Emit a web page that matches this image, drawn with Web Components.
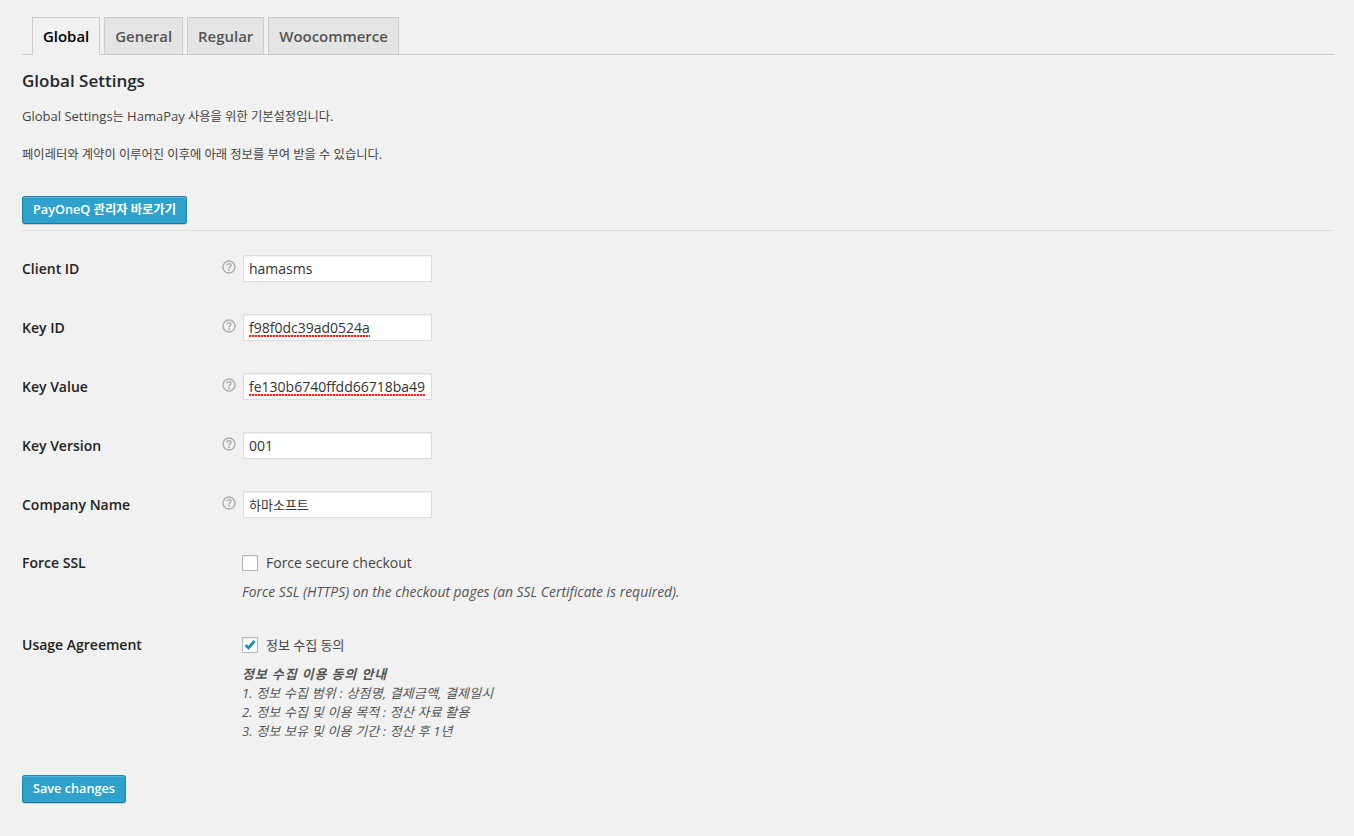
<!DOCTYPE html>
<html lang="ko">
<head>
<meta charset="utf-8">
<title>Global Settings</title>
<style>
  html, body { margin: 0; background: #f1f1f1; }
  body { font: 13px/1.4 "Open Sans", "Noto Sans CJK KR", sans-serif; color: #444; }
  .en { font-size: 13px; }
  .ko { font-size: 13px; }
  .btn-ko { font-size: 12.3px; }
  .small b { letter-spacing: .85px; }
</style>
</head>
<body>
<hp-settings>
  <hp-tabs slot="tabs">
    <hp-tab active>Global</hp-tab>
    <hp-tab>General</hp-tab>
    <hp-tab>Regular</hp-tab>
    <hp-tab>Woocommerce</hp-tab>
  </hp-tabs>

  <hp-intro slot="intro" heading="Global Settings">
    <p><span class="en">Global Settings</span>는 <span class="en">HamaPay</span> 사용을 위한 기본설정입니다.</p>
    <p>페이레터와 계약이 이루어진 이후에 아래 정보를 부여 받을 수 있습니다.</p>
    <hp-button>PayOneQ <span class="btn-ko">관리자 바로가기</span></hp-button>
  </hp-intro>

  <hp-field label="Client ID" help><hp-input>hamasms</hp-input></hp-field>
  <hp-field label="Key ID" help><hp-input misspelled>f98f0dc39ad0524a</hp-input></hp-field>
  <hp-field label="Key Value" help><hp-input misspelled>fe130b6740ffdd66718ba49</hp-input></hp-field>
  <hp-field label="Key Version" help><hp-input>001</hp-input></hp-field>
  <hp-field label="Company Name" help><hp-input><span class="ko">하마소프트</span></hp-input></hp-field>

  <hp-check-field label="Force SSL" text="Force secure checkout">
    <em>Force SSL (HTTPS) on the checkout pages (an SSL Certificate is required).</em>
  </hp-check-field>

  <hp-check-field label="Usage Agreement" text="정보 수집 동의" checked korean>
    <div class="small"><em><b>정보 수집 이용 동의 안내</b><br>
    1. 정보 수집 범위 : 상점명, 결제금액, 결제일시<br>
    2. 정보 수집 및 이용 목적 : 정산 자료 활용<br>
    3. 정보 보유 및 이용 기간 : 정산 후 1년</em></div>
  </hp-check-field>

  <hp-button slot="footer">Save changes</hp-button>
</hp-settings>

<script>
const FONT = '"Open Sans", "Noto Sans CJK KR", sans-serif';

class HpSettings extends HTMLElement {
  constructor() {
    super();
    this.attachShadow({ mode: 'open' }).innerHTML = `
    <style>
      :host { display: block; padding: 17px 20px 33px 22px; font-family: ${FONT}; }
      .fields { padding-top: 24px; }
      .footer { padding-top: 4px; }
    </style>
    <slot name="tabs"></slot>
    <slot name="intro"></slot>
    <div class="fields"><slot></slot></div>
    <div class="footer"><slot name="footer"></slot></div>
    `;
  }
}

class HpTabs extends HTMLElement {
  constructor() {
    super();
    this.attachShadow({ mode: 'open' }).innerHTML = `
    <style>
      :host { display: flex; gap: 4px; padding-left: 10px; border-bottom: 1px solid #ccc; height: 37px; }
    </style>
    <slot></slot>
    `;
  }
}

class HpTab extends HTMLElement {
  constructor() {
    super();
    this.attachShadow({ mode: 'open' }).innerHTML = `
    <style>
      :host {
        display: block; box-sizing: border-box; height: 37px; padding: 0 10px;
        border: 1px solid #ccc; border-bottom: 0;
        background: #e4e4e4; color: #555;
        font: 600 14.95px/37px ${FONT};
      }
      :host([active]) { height: 38px; background: #f1f1f1; color: #000; }
    </style>
    <slot></slot>
    `;
  }
}

class HpIntro extends HTMLElement {
  constructor() {
    super();
    this.attachShadow({ mode: 'open' }).innerHTML = `
    <style>
      :host { display: block; border-bottom: 1px solid #ddd; padding-bottom: 6px; }
      h3 { margin: 0; padding-top: 15px; color: #23282d; font: 600 17px/22px ${FONT}; }
      ::slotted(p) { margin: 0 0 20px; font-size: 12.3px; line-height: 18px; color: #444; }
      .body { padding-top: 15px; }
      ::slotted(hp-button) { margin-top: 32px; }
    </style>
    <h3></h3>
    <div class="body"><slot></slot></div>
    `;
    this.shadowRoot.querySelector('h3').textContent = this.getAttribute('heading');
  }
}

class HpButton extends HTMLElement {
  constructor() {
    super();
    this.attachShadow({ mode: 'open' }).innerHTML = `
    <style>
      :host { display: block; width: fit-content; }
      div {
        box-sizing: border-box; height: 28px; padding: 0 10px 1px;
        background: #2ea2cc; border: 1px solid #1f85b0; border-bottom-color: #1a78a3; border-radius: 3px;
        box-shadow: inset 0 1px 0 rgba(120,200,230,.5), 0 1px 0 rgba(0,0,0,.15);
        color: #fff; font: 600 12.7px/25px ${FONT}; white-space: nowrap;
      }
    </style>
    <div><slot></slot></div>
    `;
  }
}

class HpField extends HTMLElement {
  constructor() {
    super();
    this.attachShadow({ mode: 'open' }).innerHTML = `
    <style>
      :host { display: grid; grid-template-columns: 200px 21px 1fr; height: 59px; }
      .label { font: 600 14px/27px ${FONT}; color: #222; }
      svg { display: block; margin-top: 5px; }
    </style>
    <div class="label"></div>
    <div class="help">
      <svg width="14" height="14" viewBox="0 0 14 14" fill="none" stroke="#b0b0b0">
        <circle cx="7" cy="7" r="6" stroke-width="1.5"/>
        <path d="M5 5.6C5 4.4 6 3.8 7 3.8s2 .6 2 1.7c0 1.4-2 1.4-2 2.9" stroke-width="1.5"/>
        <circle cx="7" cy="10.2" r="1" fill="#b0b0b0" stroke="none"/>
      </svg>
    </div>
    <div><slot></slot></div>
    `;
    this.shadowRoot.querySelector('.label').textContent = this.getAttribute('label');
  }
}

class HpInput extends HTMLElement {
  constructor() {
    super();
    this.attachShadow({ mode: 'open' }).innerHTML = `
    <style>
      :host {
        display: block; box-sizing: border-box; width: 189px; height: 27px;
        padding: 0 0 0 5px; overflow: hidden; white-space: nowrap;
        background: #fff; border: 1px solid #ddd;
        box-shadow: inset 0 1px 2px rgba(0,0,0,.07);
        color: #333; font: 400 14px/25px ${FONT};
      }
      :host([misspelled]) span {
        background: repeating-linear-gradient(90deg, #f0261c 0 2px, #ffb0a8 2px 3px) 0 17px / 100% 2px no-repeat;
      }
    </style>
    <span><slot></slot></span>
    `;
  }
}

class HpCheckField extends HTMLElement {
  constructor() {
    super();
    this.attachShadow({ mode: 'open' }).innerHTML = `
    <style>
      :host { display: grid; grid-template-columns: 220px 1fr; padding-top: 3px; padding-bottom: 30px; }
      .label { font: 600 14px/20px ${FONT}; color: #222; }
      .check { display: flex; align-items: center; gap: 8px; height: 20px; font-size: 14px; color: #444; }
      :host([korean]) .text { font-size: 13px; }
      .box {
        box-sizing: border-box; width: 16px; height: 16px; flex: none;
        background: #fff; border: 1px solid #b4b9be;
        box-shadow: inset 0 1px 2px rgba(0,0,0,.1);
      }
      svg { display: block; }
      .desc { padding-top: 9px; font-size: 13.9px; line-height: 20px; color: #555; }
      ::slotted(.small) { font-size: 13px; line-height: 19px; letter-spacing: .15px; padding-top: 1px; }
    </style>
    <div class="label"></div>
    <div>
      <div class="check"><span class="box"></span><span class="text"></span></div>
      <div class="desc"><slot></slot></div>
    </div>
    `;
    const s = this.shadowRoot;
    s.querySelector('.label').textContent = this.getAttribute('label');
    s.querySelector('.text').textContent = this.getAttribute('text');
    if (this.hasAttribute('checked')) {
      s.querySelector('.box').innerHTML = `<svg width="14" height="14" viewBox="0 0 14 14"><path d="M2.6 7l2.9 3 6-7" fill="none" stroke="#1e8cbe" stroke-width="2.7"/></svg>`;
    }
  }
}

customElements.define('hp-settings', HpSettings);
customElements.define('hp-tabs', HpTabs);
customElements.define('hp-tab', HpTab);
customElements.define('hp-intro', HpIntro);
customElements.define('hp-button', HpButton);
customElements.define('hp-field', HpField);
customElements.define('hp-input', HpInput);
customElements.define('hp-check-field', HpCheckField);
</script>
</body>
</html>
